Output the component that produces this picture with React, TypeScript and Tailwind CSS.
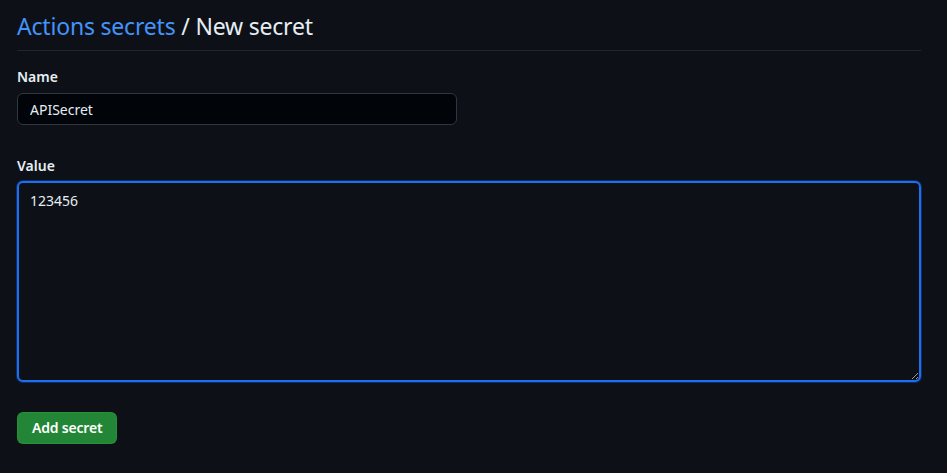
import React from "react";

export default function App() {
  return (
    <div
      className="min-h-[473px] w-full bg-[#0d1117] pl-[17px] pr-[26px] pt-[11px] text-[#e6edf3]"
      style={{ fontFamily: '"Noto Sans", "Liberation Sans", sans-serif' }}
    >
      <div className="border-b border-[#21262d] pb-[8px]">
        <h2 className="text-[23px] font-normal leading-[31px] tracking-[-0.2px]">
          <a className="text-[#4493f8]">Actions secrets</a>
          <span className="text-[#e6edf3]"> / New secret</span>
        </h2>
      </div>

      <div className="mt-[16px]">
        <label className="block text-[14px] font-semibold leading-[20px] text-[#e6edf3]">Name</label>
        <input
          readOnly
          value="APISecret"
          className="mt-[6px] block h-[32px] w-[440px] rounded-[6px] border border-[#30363d] bg-[#010409] px-[12px] text-[14px] leading-[20px] text-[#e6edf3] outline-none"
        />
      </div>

      <div className="mt-[31px]">
        <label className="block text-[14px] font-semibold leading-[20px] text-[#e6edf3]">Value</label>
        <textarea
          readOnly
          value="123456"
          className="mt-[5px] block h-[201px] w-full rounded-[6px] border-2 border-[#1f6feb] bg-[#0d1117] px-[11px] py-[8px] text-[14px] leading-[20px] text-[#e6edf3] shadow-[0_0_0_1px_#0c2d6b] outline-none"
        />
      </div>

      <button className="mt-[30px] h-[32px] rounded-[6px] border border-[#2ea043]/40 bg-[#238636] px-[14px] text-[14px] font-semibold leading-[20px] tracking-[-0.2px] text-white">
        Add secret
      </button>
    </div>
  );
}
